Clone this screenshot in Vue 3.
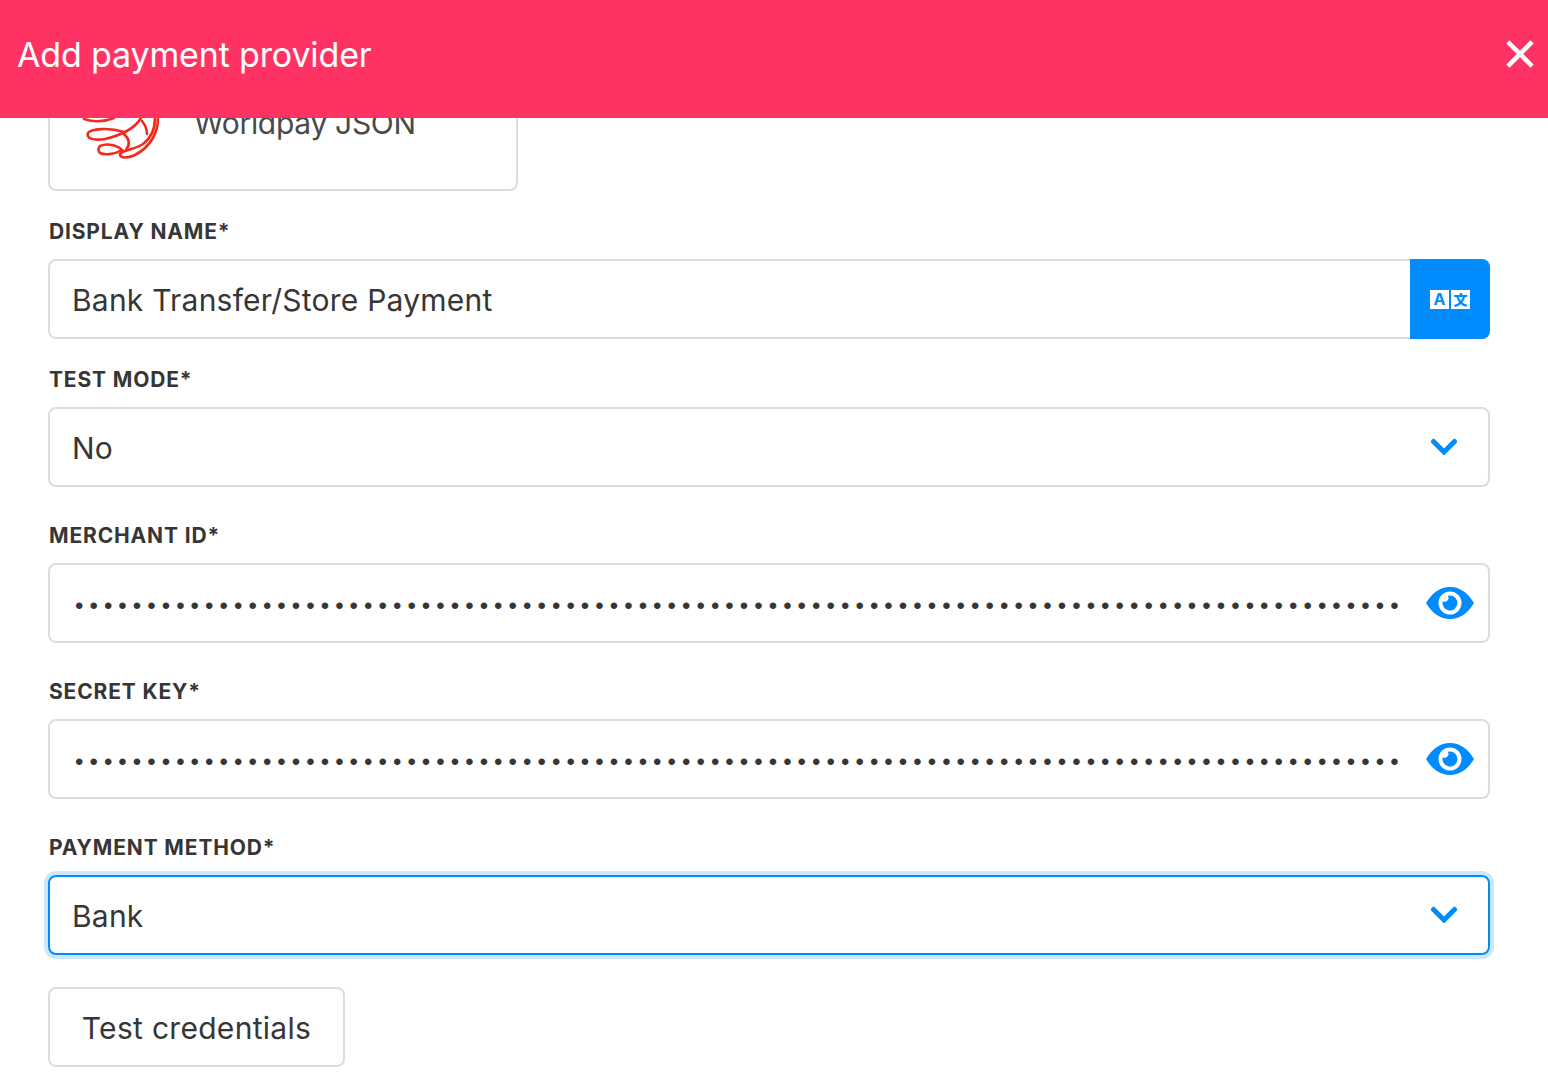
<script setup>
const dots = '•'.repeat(92)
</script>

<template>
  <div class="page">
    <header class="topbar">
      <h1 class="title">Add payment provider</h1>
      <svg class="close" width="28" height="28" viewBox="0 0 28 28" aria-label="Close">
        <path d="M3.500 3.500 L24.500 24.500 M24.500 3.500 L3.500 24.500" />
      </svg>
    </header>
    <main class="content">
      <div class="provider">
        <svg class="logo" width="90" height="90" viewBox="68 78 90 90">
          <path d="M84 119 C93 122 104 122 114 118" />
          <path d="M141 118 C135 128 122 135 105 139 C93 141 86 138 88 133 C91 129 108 127 124 132" />
          <path d="M100 146 C107 143 117 145 122 150 C114 155 104 155 100 153 C98 151 98 148 100 146 Z" />
          <path d="M158 118 C158 131 152 146 135 155 C126 159 120 158 120 154 C123 150 134 150 143 144 C151 138 155 128 155 118" />
          <path d="M123 133 C130 139 130 145 126 150" />
          <path d="M142 121 C146 126 147 129 147 134" />
        </svg>
        <span class="provider-name">Worldpay JSON</span>
      </div>

      <section class="field first">
        <label class="label">DISPLAY NAME*</label>
        <div class="box addon-box">
          <span class="value">Bank Transfer/Store Payment</span>
          <button class="addon" aria-label="Translate">
            <span class="tile">A</span>
            <span class="tile cjk">文</span>
          </button>
        </div>
      </section>

      <section class="field short">
        <label class="label">TEST MODE*</label>
        <div class="box">
          <span class="value">No</span>
          <svg class="chev" width="28" height="20" viewBox="0 0 28 20"><path d="M3.500 4.500 L14 15 L24.500 4.500" /></svg>
        </div>
      </section>

      <section class="field">
        <label class="label">MERCHANT ID*</label>
        <div class="box">
          <span class="dots">{{ dots }}</span>
          <svg class="eye" width="48" height="32" viewBox="0 0 48 32">
            <path fill-rule="evenodd" d="M0 16 C6 6 14 0 24 0 C34 0 42 6 48 16 C42 26 34 32 24 32 C14 32 6 26 0 16 Z M24 4.500 A11.500 11.500 0 1 0 24 27.500 A11.500 11.500 0 1 0 24 4.500 Z" />
            <path fill-rule="evenodd" d="M24 8.500 A7.500 7.500 0 1 1 16.700 14.200 A3.800 3.800 0 0 0 21.800 8.800 A7.500 7.500 0 0 1 24 8.500 Z" />
          </svg>
        </div>
      </section>

      <section class="field">
        <label class="label">SECRET KEY*</label>
        <div class="box">
          <span class="dots">{{ dots }}</span>
          <svg class="eye" width="48" height="32" viewBox="0 0 48 32">
            <path fill-rule="evenodd" d="M0 16 C6 6 14 0 24 0 C34 0 42 6 48 16 C42 26 34 32 24 32 C14 32 6 26 0 16 Z M24 4.500 A11.500 11.500 0 1 0 24 27.500 A11.500 11.500 0 1 0 24 4.500 Z" />
            <path fill-rule="evenodd" d="M24 8.500 A7.500 7.500 0 1 1 16.700 14.200 A3.800 3.800 0 0 0 21.800 8.800 A7.500 7.500 0 0 1 24 8.500 Z" />
          </svg>
        </div>
      </section>

      <section class="field">
        <label class="label">PAYMENT METHOD*</label>
        <div class="box focused">
          <span class="value">Bank</span>
          <svg class="chev" width="28" height="20" viewBox="0 0 28 20"><path d="M3.500 4.500 L14 15 L24.500 4.500" /></svg>
        </div>
      </section>

      <button class="test">Test credentials</button>
    </main>
  </div>
</template>

<style>
html, body { margin: 0; background: #fff; }
</style>

<style scoped>
.page {
  width: 1548px;
  height: 1082px;
  overflow: hidden;
  display: flex;
  flex-direction: column;
  font-family: Inter, "Noto Sans", sans-serif;
  color: #363636;
  background: #fff;
}
.topbar {
  flex: none;
  height: 118px;
  background: #ff3363;
  display: flex;
  align-items: flex-start;
  justify-content: space-between;
  box-sizing: border-box;
  padding: 0 14px 0 17px;
  position: relative;
  z-index: 2;
}
.title {
  margin: 0;
  font-size: 34px;
  line-height: 110px;
  font-weight: 400;
  letter-spacing: -0.15px;
  color: #fff;
}
.close { margin-top: 40px; }
.close path { stroke: #fff; stroke-width: 4.500; stroke-linecap: square; fill: none; }
.content {
  flex: 1;
  min-height: 0;
  padding: 0 58px 0 48px;
}
.provider {
  box-sizing: border-box;
  width: 470px;
  height: 160px;
  margin-top: -87px;
  border: 2px solid #ddd;
  border-radius: 8px;
  display: flex;
  align-items: center;
  padding: 24px 0 0 18px;
}
.logo { flex: none; overflow: visible; }
.logo path { fill: none; stroke: #f5281c; stroke-width: 2.600; stroke-linecap: round; }
.provider-name {
  margin-left: 36px;
  font-size: 30px;
  line-height: 40px;
  letter-spacing: -0.3px;
  color: #4a4a4a;
}
.field { margin-bottom: 35px; }
.field.first { margin-top: 27px; margin-bottom: 27px; }
.label {
  display: block;
  height: 28px;
  margin-bottom: 13px;
  padding-left: 1px;
  font-size: 21px;
  line-height: 28px;
  font-weight: 700;
  letter-spacing: 0.85px;
  color: #363636;
}
.box {
  box-sizing: border-box;
  height: 80px;
  border: 2px solid #ddd;
  border-radius: 8px;
  display: flex;
  align-items: center;
  justify-content: space-between;
  padding: 0 14px 0 22px;
  position: relative;
}
.addon-box { padding-right: 0; }
.value {
  padding-top: 1px;
  font-size: 30px;
  line-height: 40px;
  letter-spacing: 0.22px;
  color: #363636;
}
.addon {
  position: absolute;
  top: -2px;
  right: -2px;
  bottom: -2px;
  width: 80px;
  border: 0;
  padding: 0;
  background: #008cff;
  border-radius: 0 8px 8px 0;
  display: flex;
  align-items: center;
  justify-content: center;
  gap: 2px;
}
.tile {
  width: 19px;
  height: 19px;
  background: #fff;
  color: #008cff;
  font: 700 16px/19px Inter, sans-serif;
  text-align: center;
}
.tile.cjk { font: 900 14px/19px "Noto Sans CJK SC", sans-serif; }
.chev { flex: none; margin-right: 16px; }
.chev path { fill: none; stroke: #008cff; stroke-width: 5; stroke-linecap: round; stroke-linejoin: miter; }
.eye { flex: none; fill: #008cff; }
.dots {
  flex: none;
  width: 1330px;
  height: 40px;
  padding: 6px 0 0 3px;
  white-space: nowrap;
  font-family: "Liberation Sans", sans-serif;
  font-size: 24px;
  line-height: 40px;
  letter-spacing: 6.050px;
  color: #363636;
}
.focused {
  border-color: #008cff;
  box-shadow: 0 0 0 4px #cce8ff;
}
.test {
  display: block;
  box-sizing: border-box;
  width: 297px;
  height: 80px;
  margin-top: -3px;
  border: 2px solid #ddd;
  border-radius: 8px;
  background: #fff;
  font-family: inherit;
  font-size: 30px;
  letter-spacing: 0.3px;
  color: #363636;
  padding: 2px 0 0;
}
</style>
